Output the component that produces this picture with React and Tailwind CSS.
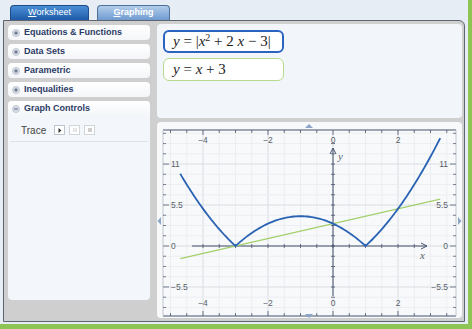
import React from "react";

const sections = ["Equations & Functions", "Data Sets", "Parametric", "Inequalities"];

// plot coordinates inside the graph panel
const X = (x) => 176 + 32.5 * x;
const Y = (y) => 124 - 7.45 * y;

function range(from, to, step) {
  const out = [];
  for (let v = from; v <= to + 1e-9; v += step) out.push(Math.round(v * 1000) / 1000);
  return out;
}

function curvePath() {
  const f = (x) => Math.abs(x * x + 2 * x - 3);
  const pieces = [
    [-4.7, -3],
    [-3, 1],
    [1, 3.3],
  ];
  const pts = [];
  pieces.forEach(([a, b], i) => {
    const n = 60;
    for (let k = i === 0 ? 0 : 1; k <= n; k++) {
      const x = a + ((b - a) * k) / n;
      pts.push(`${X(x).toFixed(2)},${Y(f(x)).toFixed(2)}`);
    }
  });
  return "M" + pts.join(" L");
}

function ToggleIcon({ open }) {
  return (
    <svg width="8" height="8" viewBox="0 0 8 8" className="shrink-0">
      <circle cx="4" cy="4" r="3.5" fill="#d9dee6" stroke="#b7bfca" strokeWidth="0.8" />
      <line x1="2.2" y1="4" x2="5.8" y2="4" stroke="#4d5d7c" strokeWidth="1" />
      {!open && <line x1="4" y1="2.2" x2="4" y2="5.8" stroke="#4d5d7c" strokeWidth="1" />}
    </svg>
  );
}

function SectionRow({ label, open }) {
  return (
    <div className="flex h-[15px] items-center gap-[4px] rounded-[4px] bg-gradient-to-b from-white to-[#f4f6f9] pl-[4px]">
      <ToggleIcon open={open} />
      <span className="text-[9px] font-bold leading-none text-[#2c3a66]">{label}</span>
    </div>
  );
}

function Graph() {
  const vx = range(-5, 3.5, 0.5);
  const hy = range(-8.25, 15.125, 1.375);
  const xLabels = [-4, -2, 0, 2];
  const yLabels = [11, 5.5, 0, -5.5];
  const fmt = (v) => (v < 0 ? "\u2212" + Math.abs(v) : String(v));

  return (
    <svg width="305" height="196" viewBox="0 0 305 196" className="block">
      {/* grid */}
      {vx.map((v) => (
        <line key={"gx" + v} x1={X(v)} y1="8" x2={X(v)} y2="194" stroke={v % 2 === 0 ? "#d9dde2" : "#eceef1"} strokeWidth="1" />
      ))}
      {hy.map((v) => (
        <line key={"gy" + v} x1="6" y1={Y(v)} x2="299" y2={Y(v)} stroke={Math.abs(v % 5.5) < 1e-6 ? "#d9dde2" : "#eceef1"} strokeWidth="1" />
      ))}

      {/* frame */}
      <line x1="6" y1="8" x2="299" y2="8" stroke="#47536d" strokeWidth="1.2" />
      <line x1="6" y1="194" x2="299" y2="194" stroke="#47536d" strokeWidth="1.2" />
      <line x1="6" y1="8" x2="6" y2="194" stroke="#c2c7cf" strokeWidth="1" />
      <line x1="299" y1="8" x2="299" y2="194" stroke="#c2c7cf" strokeWidth="1" />
      {vx.map((v) => {
        const len = v % 2 === 0 ? 5 : 3;
        return (
          <g key={"tx" + v} stroke="#47536d" strokeWidth="0.8">
            <line x1={X(v)} y1="8" x2={X(v)} y2={8 + len} />
            <line x1={X(v)} y1="194" x2={X(v)} y2={194 - len} />
          </g>
        );
      })}
      {hy.map((v) => {
        const len = Math.abs(v % 5.5) < 1e-6 ? 6 : 3;
        return (
          <g key={"ty" + v} stroke="#59647a" strokeWidth="0.8">
            <line x1="6" y1={Y(v)} x2={6 + len} y2={Y(v)} />
            <line x1="299" y1={Y(v)} x2={299 - len} y2={Y(v)} />
          </g>
        );
      })}

      {/* labels */}
      <g fontFamily="'Liberation Sans', Arial, sans-serif" fontSize="8.5" fill="#5a5f68">
        {xLabels.map((v) => (
          <g key={"lx" + v}>
            <text x={X(v)} y="20.5" textAnchor="middle">{fmt(v)}</text>
            <text x={X(v)} y="184" textAnchor="middle">{fmt(v)}</text>
          </g>
        ))}
        {yLabels.map((v) => (
          <g key={"ly" + v}>
            <text x="14" y={Y(v) + 3}>{fmt(v)}</text>
            <text x="291" y={Y(v) + 3} textAnchor="end">{fmt(v)}</text>
          </g>
        ))}
      </g>

      {/* axes */}
      <g stroke="#47536d" strokeWidth="1">
        <line x1="35" y1={Y(0)} x2="270" y2={Y(0)} />
        <path d={`M264,${Y(0) - 3} L270,${Y(0)} L264,${Y(0) + 3}`} fill="none" />
        <line x1={X(0)} y1="174" x2={X(0)} y2="26" />
        <path d={`M${X(0) - 3},32 L${X(0)},26 L${X(0) + 3},32`} fill="none" />
        {range(-4, 2.5, 0.5).map((v) => (
          <line key={"ax" + v} x1={X(v)} y1={Y(0) - 2} x2={X(v)} y2={Y(0) + 2} strokeWidth="0.8" />
        ))}
        {range(-6.875, 13.75, 1.375).map((v) => (
          <line key={"ay" + v} x1={X(0) - 2} y1={Y(v)} x2={X(0) + 2} y2={Y(v)} strokeWidth="0.8" />
        ))}
      </g>
      <g fontFamily="'Liberation Serif', 'Times New Roman', serif" fontStyle="italic" fontSize="11" fill="#5a5f68">
        <text x="263" y="137">x</text>
        <text x="181" y="38">y</text>
      </g>

      {/* curves */}
      <line x1={X(-4.7)} y1={Y(-1.7)} x2={X(3.3)} y2={Y(6.3)} stroke="#a3d06b" strokeWidth="1.2" />
      <path d={curvePath()} fill="none" stroke="#2a63b3" strokeWidth="1.8" strokeLinejoin="miter" />

      {/* scroll nubs */}
      <g fill="#8aa5c7">
        <polygon points="148,6 152,2 156,6" />
        <polygon points="148,192 152,196 156,192" />
        <polygon points="4,95 0.5,99 4,103" />
        <polygon points="301,95 304.5,99 301,103" />
      </g>
    </svg>
  );
}

function MathText({ children }) {
  return (
    <span className="whitespace-pre font-['Liberation_Serif','Times_New_Roman',serif] text-[15px] leading-none text-[#1e1e1e]">
      {children}
    </span>
  );
}

export default function App() {
  return (
    <div className="flex h-[329px] w-[472px] overflow-hidden bg-[#e7edf4] font-['Liberation_Sans',Arial,sans-serif]">
      <div className="flex w-[468px] flex-col">
        {/* tabs */}
        <div className="flex h-[20px] items-end gap-[8px] pl-[10px]">
          <div className="flex h-[15px] w-[79px] items-center justify-center rounded-t-[4px] border border-b-0 border-[#1d4c88] bg-gradient-to-b from-[#4a8fd6] to-[#1f5ba7] text-[9px] text-white">
            <span>
              <span className="underline">W</span>orksheet
            </span>
          </div>
          <div className="flex h-[15px] w-[73px] items-center justify-center rounded-t-[4px] border border-b-0 border-[#4e719c] bg-gradient-to-b from-[#b2cdea] to-[#6f9bd1] text-[9px] font-bold text-white">
            <span>
              <span className="underline">G</span>raphing
            </span>
          </div>
        </div>

        {/* main panel */}
        <div className="ml-[3px] flex h-[302px] w-[462px] rounded-tr-[6px] border border-[#5e6570] bg-[#cfcfcf] pl-[4px] pt-[4px]">
          {/* sidebar */}
          <div className="flex w-[142px] flex-col gap-[4px]">
            {sections.map((s) => (
              <SectionRow key={s} label={s} />
            ))}
            <div className="flex h-[199px] flex-col rounded-[4px] bg-[#f3f6fa]">
              <SectionRow label="Graph Controls" open />
              <div className="flex h-[22px] items-center pl-[13px] pt-[6px]">
                <span className="text-[10px] text-[#444]">Trace</span>
                <div className="ml-[8px] flex gap-[4px]">
                  <div className="flex h-[10px] w-[11px] items-center justify-center border border-[#bfc5cc] bg-white">
                    <svg width="4" height="5" viewBox="0 0 4 5">
                      <polygon points="0.5,0 3.5,2.5 0.5,5" fill="#333" />
                    </svg>
                  </div>
                  <div className="flex h-[10px] w-[11px] items-center justify-center border border-[#d0d5da] bg-white">
                    <svg width="4" height="4" viewBox="0 0 4 4">
                      <rect x="0.3" y="0" width="1.1" height="4" fill="#cfcfcf" />
                      <rect x="2.6" y="0" width="1.1" height="4" fill="#cfcfcf" />
                    </svg>
                  </div>
                  <div className="flex h-[10px] w-[11px] items-center justify-center border border-[#d0d5da] bg-white">
                    <div className="h-[4px] w-[4px] bg-[#cfcfcf]" />
                  </div>
                </div>
              </div>
              <div className="mx-[2px] mt-[3px] h-px bg-[#dde3ea]" />
            </div>
          </div>

          {/* right column */}
          <div className="ml-[7px] mt-[-1px] flex w-[305px] flex-col gap-[4px]">
            <div className="flex h-[94px] flex-col gap-[5px] rounded-[4px] bg-[#f2f6fb] pl-[6px] pt-[6px]">
              <div className="flex h-[23px] w-[121px] items-center rounded-[6px] border-2 border-[#2b63c0] bg-white pl-[8px]">
                <MathText>
                  <i>y</i> = |<i>x</i>
                  <sup className="text-[10px]">2</sup> + 2 <i>x</i> {"\u2212"} 3|
                </MathText>
              </div>
              <div className="flex h-[23px] w-[121px] items-center rounded-[6px] border-[1.5px] border-[#b7da8c] bg-white pl-[9px]">
                <MathText>
                  <i>y</i> = <i>x</i> + 3
                </MathText>
              </div>
            </div>
            <div className="h-[196px] rounded-[4px] bg-[#f7f9fb]">
              <Graph />
            </div>
          </div>
        </div>

        <div className="h-[2px]" />
        <div className="h-[5px] bg-[#8dc454]" />
      </div>
      <div className="w-[4px] bg-[#8dc454]" />
    </div>
  );
}
